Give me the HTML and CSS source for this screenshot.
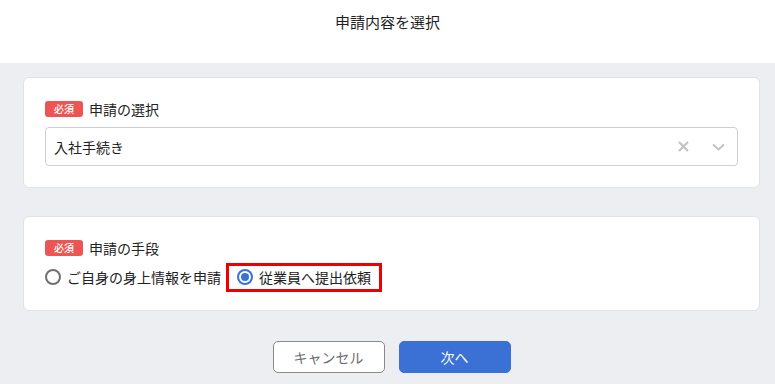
FILE: index.html
```html
<!DOCTYPE html>
<html>
<head>
  <meta charset="utf-8" />
  <title>申請内容を選択</title>
  <link rel="stylesheet" href="styles.css">
</head>
<body>
  <header class="header">申請内容を選択</header>

  <main class="content">
    <section class="card card-select">
      <div class="field-label"><span class="badge">必須</span>申請の選択</div>
      <div class="select">
        <span class="select-value">入社手続き</span>
        <span class="select-icons">
          <svg width="11" height="11" viewBox="0 0 11 11"><path d="M1 1L10 10M10 1L1 10" stroke="#c2c2c2" stroke-width="2.2" fill="none"/></svg>
          <svg width="13" height="8" viewBox="0 0 13 8"><path d="M1 1.5L6.5 6.5L12 1.5" stroke="#c2c2c2" stroke-width="1.8" fill="none"/></svg>
        </span>
      </div>
    </section>

    <section class="card card-method">
      <div class="field-label"><span class="badge">必須</span>申請の手段</div>
      <div class="radios">
        <label class="radio"><span class="radio-dot"></span>ご自身の身上情報を申請</label>
        <label class="radio radio-marked"><span class="radio-dot checked"></span>従業員へ提出依頼</label>
      </div>
    </section>

    <div class="actions">
      <button class="btn btn-cancel">キャンセル</button>
      <button class="btn btn-next">次へ</button>
    </div>
  </main>
</body>
</html>
```

FILE: styles.css
```css
body {
  margin: 0;
  width: 775px;
  height: 384px;
  overflow: hidden;
  font-family: "Noto Sans CJK JP", "Noto Sans", sans-serif;
  color: #222;
  background: #edeef2;
}
.header {
  height: 63px;
  box-sizing: border-box;
  padding-top: 12px;
  line-height: 20px;
  font-size: 15px;
  text-align: center;
  background: #fff;
  color: #1e1e1e;
}
.content {
  padding: 14px 15px 0 23px;
}
.card {
  background: #fff;
  border: 1px solid #e1e2e6;
  border-radius: 6px;
  box-sizing: border-box;
  padding: 21px 21px 0 21px;
}
.card-select {
  height: 111px;
}
.card-method {
  height: 95px;
  margin-top: 28px;
}
.field-label {
  display: flex;
  align-items: center;
  height: 20px;
  font-size: 14px;
  line-height: 20px;
}
.badge {
  display: inline-block;
  width: 38px;
  height: 16px;
  line-height: 16px;
  margin-right: 6px;
  border-radius: 3px;
  background: #ec5553;
  color: #fff;
  font-size: 10px;
  font-weight: 500;
  text-align: center;
}
.select {
  margin-top: 8px;
  height: 39px;
  box-sizing: border-box;
  border: 1px solid #cfcfd2;
  border-radius: 4px;
  display: flex;
  align-items: center;
  justify-content: space-between;
  padding: 0 12px 0 8px;
  font-size: 14px;
}
.select-icons {
  display: flex;
  align-items: center;
  gap: 23px;
}
.radios {
  display: flex;
  align-items: center;
  gap: 5px;
  margin-top: 5px;
  height: 28px;
}
.radio {
  display: flex;
  align-items: center;
  font-size: 14px;
  gap: 6px;
}
.radio-marked {
  border: 3px solid #ee0000;
  height: 29px;
  box-sizing: border-box;
  padding: 0 8px;
}
.radio-dot {
  width: 16px;
  height: 16px;
  box-sizing: border-box;
  border: 2px solid #707070;
  border-radius: 50%;
  position: relative;
}
.radio-dot.checked {
  border-color: #3b70d8;
}
.radio-dot.checked::after {
  content: "";
  position: absolute;
  left: 2px;
  top: 2px;
  width: 8px;
  height: 8px;
  border-radius: 50%;
  background: #3b70d8;
}
.actions {
  display: flex;
  justify-content: center;
  gap: 14px;
  margin-top: 30px;
}
.btn {
  width: 112px;
  height: 32px;
  border-radius: 5px;
  font-family: "Noto Sans CJK JP", "Noto Sans", sans-serif;
  font-size: 14px;
  cursor: pointer;
}
.btn-cancel {
  background: #fff;
  border: 1px solid #8a8a8a;
  color: #6e6e6e;
}
.btn-next {
  background: #3b70d4;
  border: 1px solid #3b70d4;
  color: #fff;
}
```
